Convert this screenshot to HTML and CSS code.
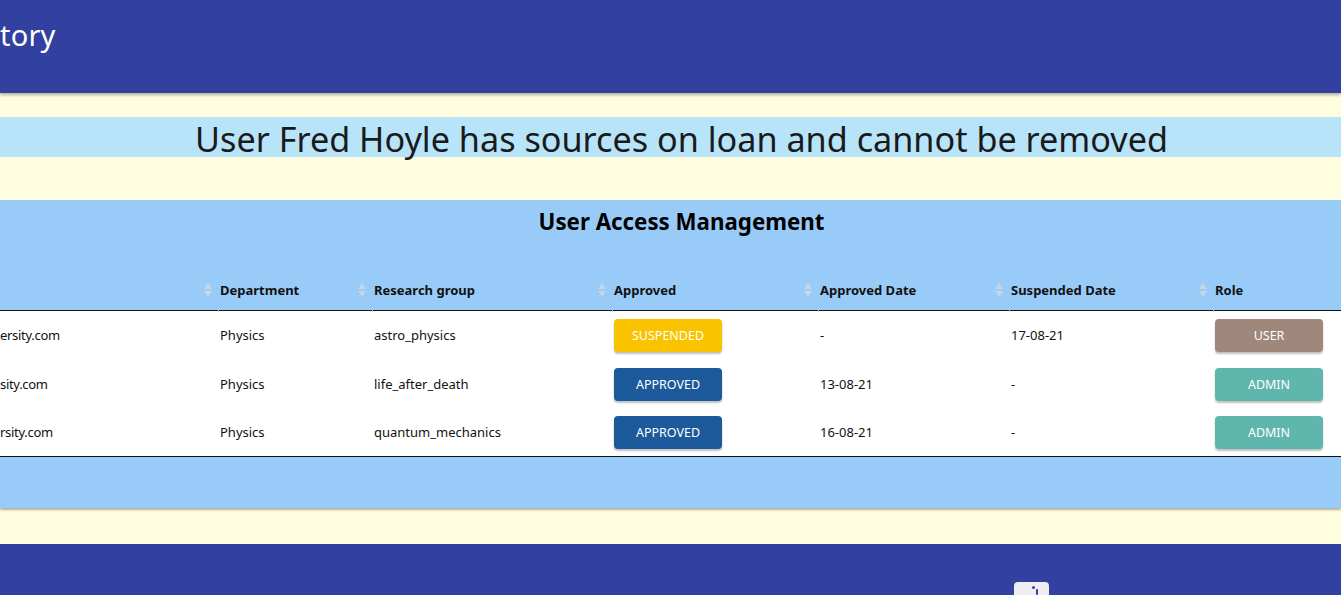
FILE: index.html
```html
<!DOCTYPE html>
<html lang="en">
<head>
<meta charset="utf-8">
<title>User Access Management</title>
<link rel="stylesheet" href="styles.css">
</head>
<body>
<header class="topbar">
  <div class="brand">tory</div>
</header>
<main class="content">
  <div class="alert">User Fred Hoyle has sources on loan and cannot be removed</div>
  <section class="panel">
    <h2 class="panel-title">User Access Management</h2>
    <table class="grid">
      <colgroup>
        <col class="c-email"><col class="c-dept"><col class="c-group"><col class="c-appr"><col class="c-adate"><col class="c-sdate"><col class="c-role">
      </colgroup>
      <thead>
        <tr>
          <th></th>
          <th><span class="sort"></span>Department</th>
          <th><span class="sort"></span>Research group</th>
          <th><span class="sort"></span>Approved</th>
          <th><span class="sort"></span>Approved Date</th>
          <th><span class="sort"></span>Suspended Date</th>
          <th><span class="sort"></span>Role</th>
        </tr>
      </thead>
      <tbody>
        <tr>
          <td>ersity.com</td>
          <td>Physics</td>
          <td>astro_physics</td>
          <td><button class="btn btn-suspended">SUSPENDED</button></td>
          <td>-</td>
          <td>17-08-21</td>
          <td><button class="btn btn-user">USER</button></td>
        </tr>
        <tr>
          <td>sity.com</td>
          <td>Physics</td>
          <td>life_after_death</td>
          <td><button class="btn btn-approved">APPROVED</button></td>
          <td>13-08-21</td>
          <td>-</td>
          <td><button class="btn btn-admin">ADMIN</button></td>
        </tr>
        <tr>
          <td>rsity.com</td>
          <td>Physics</td>
          <td>quantum_mechanics</td>
          <td><button class="btn btn-approved">APPROVED</button></td>
          <td>16-08-21</td>
          <td>-</td>
          <td><button class="btn btn-admin">ADMIN</button></td>
        </tr>
      </tbody>
    </table>
  </section>
</main>
<footer class="footer">
  <div class="fab"><span class="fab-dot"></span><span class="fab-dot small"></span></div>
</footer>
</body>
</html>
```
FILE: styles.css
```css
* { box-sizing: border-box; }
html, body { margin: 0; padding: 0; }
body {
  font-family: "Noto Sans", "Open Sans", sans-serif;
  background: #fffde0;
  color: #111;
  overflow: hidden;
  height: 595px;
}
.topbar {
  background: #3240a0;
  height: 93px;
  box-shadow: 0 2px 3px rgba(0,0,0,0.3);
  position: relative;
  z-index: 2;
  display: flex;
  align-items: flex-start;
}
.brand {
  color: #fff;
  font-size: 29px;
  line-height: 1;
  padding-top: 20px;
  letter-spacing: 0.2px;
}
.content {
  padding-top: 24px;
  padding-bottom: 36px;
}
.alert {
  background: #b8e4fa;
  height: 40px;
  line-height: 44px;
  font-size: 34.2px;
  color: #1a1a1a;
  text-align: center;
  padding-left: 22px;
  white-space: nowrap;
}
.panel {
  margin-top: 43px;
  background: #99cbf8;
  box-shadow: 0 2px 2px rgba(0,0,0,0.3);
  padding-bottom: 51px;
}
.panel-title {
  margin: 0;
  text-align: center;
  padding-left: 22px;
  font-size: 22.3px;
  font-weight: 700;
  line-height: 44px;
  height: 70px;
  color: #000;
}
.grid {
  width: 100%;
  border-collapse: collapse;
  table-layout: fixed;
  font-size: 13px;
}
.c-email { width: 218px; }
.c-dept { width: 154px; }
.c-group { width: 240px; }
.c-appr { width: 206px; }
.c-adate { width: 191px; }
.c-sdate { width: 204px; }
.c-role { width: auto; }
.grid th {
  text-align: left;
  font-weight: 700;
  height: 40px;
  padding: 0 0 0 2px;
  position: relative;
  border-bottom: 1.5px solid #111;
  vertical-align: middle;
}
.sort {
  position: absolute;
  left: -14px;
  top: 13px;
  width: 8px;
  height: 14px;
}
.sort::before, .sort::after {
  content: "";
  position: absolute;
  left: 0;
  border-left: 4px solid transparent;
  border-right: 4px solid transparent;
}
.sort::before { top: 0; border-bottom: 6px solid #c5d6e6; }
.sort::after { bottom: 0; border-top: 6px solid #c5d6e6; }
.grid tbody tr { background: #fff; }
.grid td {
  height: 49px;
  padding: 1px 0 0 2px;
  vertical-align: middle;
  white-space: nowrap;
  overflow: hidden;
  position: relative;
}
.grid tbody tr:last-child td { height: 48px; border-bottom: 1.5px solid #111; }
.grid td:first-child { padding-left: 0; letter-spacing: -0.3px; }
.grid td:not(:first-child)::after,
.grid th:not(:first-child)::after {
  content: "";
  position: absolute;
  left: 0;
  bottom: -2px;
  width: 1px;
  height: 2px;
  background: #a9cdef;
}
.btn {
  width: 108px;
  height: 33px;
  border: 0;
  border-radius: 4px;
  color: #fff;
  font-family: inherit;
  font-size: 12.5px;
  box-shadow: 0 2px 2px rgba(0,0,0,0.25);
  display: block;
  padding: 0;
}
.btn-suspended { background: #f9c300; }
.btn-approved { background: #1c5a9c; }
.btn-user { background: #a0877c; }
.btn-admin { background: #5fb6ac; }
.footer {
  background: #3240a0;
  height: 51px;
  position: relative;
}
.fab {
  position: absolute;
  left: 1014px;
  top: 38px;
  width: 35px;
  height: 30px;
  background: #eeeef2;
  border-radius: 4px;
}
.fab-dot {
  position: absolute;
  left: 18px;
  top: 4px;
  width: 3px;
  height: 3px;
  background: #3240a0;
  border-radius: 50%;
}
.fab-dot.small { left: 22px; top: 7px; width: 2px; height: 6px; border-radius: 1px; }
```
